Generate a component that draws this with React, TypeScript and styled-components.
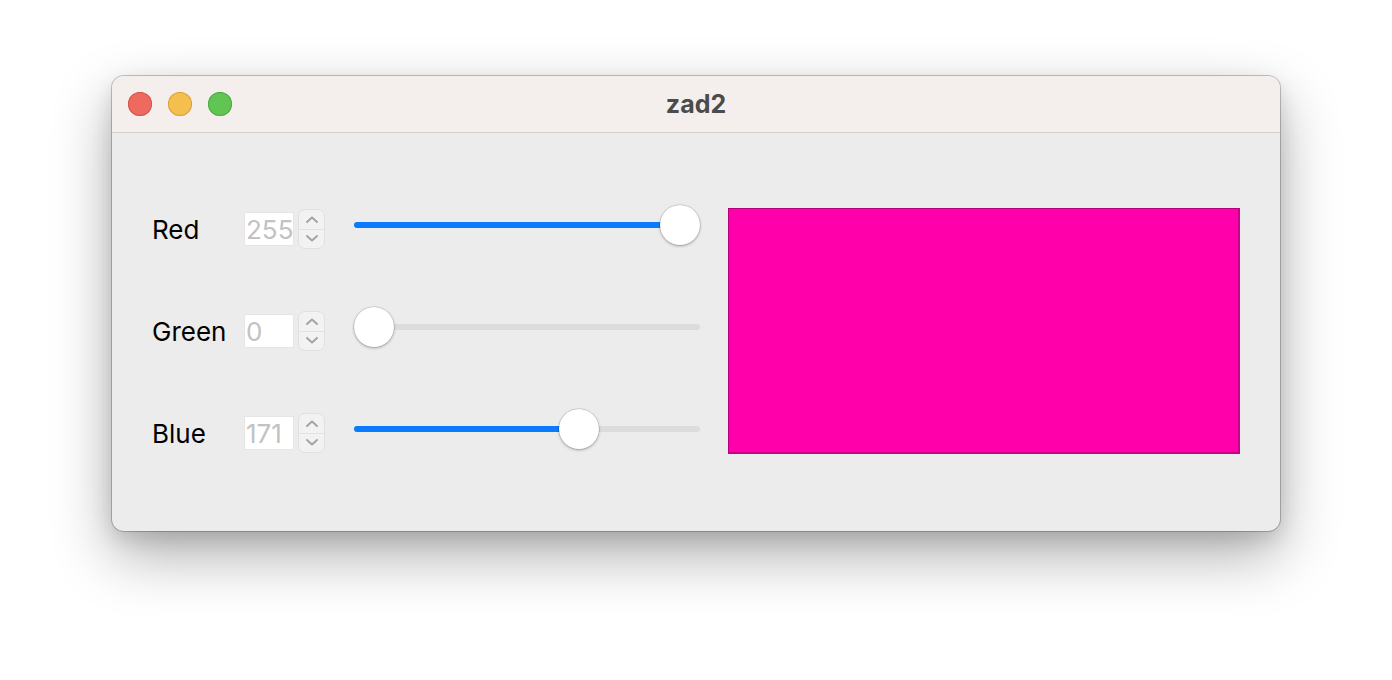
import React from "react";
import styled, { createGlobalStyle } from "styled-components";

const Global = createGlobalStyle`
  html, body { margin: 0; padding: 0; background: #ffffff; }
  body { font-family: Inter, "Noto Sans", "Liberation Sans", sans-serif; }
`;

const Page = styled.div`
  width: 1392px;
  height: 680px;
  padding: 76px 0 0 112px;
  box-sizing: border-box;
`;

const Window = styled.div`
  width: 1168px;
  height: 455px;
  border-radius: 12px;
  background: #ececec;
  box-shadow: 0 0 0 1px rgba(0, 0, 0, 0.22), 0 24px 60px rgba(0, 0, 0, 0.32), 0 8px 20px rgba(0, 0, 0, 0.12);
  overflow: hidden;
  display: flex;
  flex-direction: column;
`;

const TitleBar = styled.div`
  height: 56px;
  flex: none;
  background: #f4efec;
  border-bottom: 1px solid #d2cfcd;
  display: flex;
  align-items: center;
  position: relative;
  padding-left: 16px;
  gap: 16px;
`;

const Light = styled.span<{ $c: string; $b: string }>`
  width: 24px;
  height: 24px;
  border-radius: 50%;
  background: ${(p) => p.$c};
  box-shadow: inset 0 0 0 1px ${(p) => p.$b};
`;

const Title = styled.div`
  position: absolute;
  left: 0;
  right: 0;
  top: 0;
  bottom: 0;
  display: flex;
  align-items: center;
  justify-content: center;
  font-weight: 700;
  font-size: 25px;
  color: #4b4b4b;
  pointer-events: none;
`;

const Body = styled.div`
  flex: 1;
  display: flex;
  padding: 75px 40px 0 40px;
  gap: 28px;
`;

const Controls = styled.div`
  width: 548px;
  height: 246px;
  display: flex;
  flex-direction: column;
  justify-content: space-between;
`;

const Row = styled.div`
  height: 42px;
  display: flex;
  align-items: center;
`;

const Label = styled.div`
  width: 92px;
  font-size: 26px;
  color: #000;
`;

const Field = styled.div`
  width: 50px;
  height: 34px;
  box-sizing: border-box;
  background: #ffffff;
  border: 1px solid #e6e6e6;
  font-size: 26px;
  color: #c2c2c2;
  display: flex;
  align-items: center;
  padding-left: 1px;
  overflow: hidden;
  white-space: nowrap;
`;

const Stepper = styled.div`
  margin-left: 4px;
  width: 27px;
  height: 40px;
  box-sizing: border-box;
  border: 1px solid #e0e0e0;
  border-radius: 7px;
  background: #f2f2f2;
  display: flex;
  flex-direction: column;
`;

const StepHalf = styled.div<{ $top?: boolean }>`
  flex: 1;
  display: flex;
  align-items: center;
  justify-content: center;
  border-bottom: ${(p) => (p.$top ? "1px solid #e2e2e2" : "none")};
`;

const SliderWrap = styled.div`
  margin-left: 29px;
  margin-top: -9px;
  width: 346px;
  height: 42px;
  position: relative;
  display: flex;
  align-items: center;
`;

const Track = styled.div`
  width: 100%;
  height: 6px;
  border-radius: 3px;
  background: #dcdcdc;
  position: relative;
`;

const Fill = styled.div`
  position: absolute;
  left: 0;
  top: 0;
  bottom: 0;
  border-radius: 3px;
  background: #0a7bff;
`;

const Thumb = styled.div`
  position: absolute;
  top: 50%;
  width: 40px;
  height: 40px;
  margin-top: -20px;
  border-radius: 50%;
  background: #ffffff;
  box-shadow: 0 0 0 0.5px rgba(0, 0, 0, 0.18), 0 1px 3px rgba(0, 0, 0, 0.3);
`;

const Swatch = styled.div<{ $c: string }>`
  width: 512px;
  height: 246px;
  box-sizing: border-box;
  background: ${(p) => p.$c};
  border: 1px solid #b4007a;
  border-right-width: 2px;
  border-bottom-width: 2px;
  border-right-color: #c8008a;
  border-bottom-color: #c8008a;
`;

const Chevron = ({ up }: { up?: boolean }) => (
  <svg width="14" height="9" viewBox="0 0 14 9">
    <path
      d={up ? "M2 7 L7 2.5 L12 7" : "M2 2 L7 6.5 L12 2"}
      fill="none"
      stroke="#a4a4a4"
      strokeWidth="2"
      strokeLinecap="round"
      strokeLinejoin="round"
    />
  </svg>
);

const ColorRow = ({ label, value }: { label: string; value: number }) => {
  const travel = 346 - 40;
  const pos = (value / 255) * travel;
  return (
    <Row>
      <Label>{label}</Label>
      <Field>{value}</Field>
      <Stepper>
        <StepHalf $top>
          <Chevron up />
        </StepHalf>
        <StepHalf>
          <Chevron />
        </StepHalf>
      </Stepper>
      <SliderWrap>
        <Track>
          <Fill style={{ width: pos + 20 }} />
        </Track>
        <Thumb style={{ left: pos }} />
      </SliderWrap>
    </Row>
  );
};

export default function App() {
  const r = 255, g = 0, b = 171;
  return (
    <Page>
      <Global />
      <Window>
        <TitleBar>
          <Light $c="#ee6a5f" $b="#d5544a" />
          <Light $c="#f5bf4f" $b="#d9a23a" />
          <Light $c="#61c554" $b="#4ea943" />
          <Title>zad2</Title>
        </TitleBar>
        <Body>
          <Controls>
            <ColorRow label="Red" value={r} />
            <ColorRow label="Green" value={g} />
            <ColorRow label="Blue" value={b} />
          </Controls>
          <Swatch $c={`rgb(${r}, ${g}, ${b})`} />
        </Body>
      </Window>
    </Page>
  );
}
